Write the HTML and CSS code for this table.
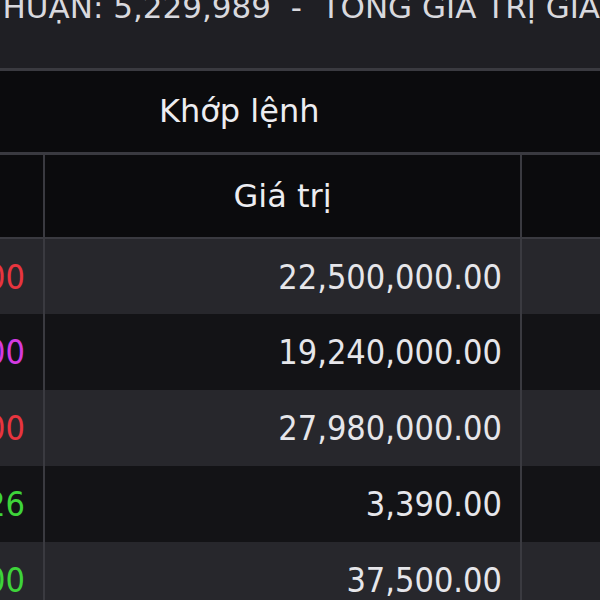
FILE: index.html
```html
<!DOCTYPE html>
<html>
<head>
    <title>Khớp lệnh</title>
    <link rel="stylesheet" href="styles.css">
</head>
<body>
    <div class="banner">
        <div class="banner-text">TỔNG KL THỎA THUẬN: 5,229,989 &nbsp;- &nbsp;TỔNG GIÁ TRỊ GIAO DỊCH</div>
    </div>

    <table class="board">
        <colgroup>
            <col class="col-price">
            <col class="col-value">
            <col class="col-rest">
        </colgroup>
        <thead>
            <tr class="head-group">
                <th colspan="3"><span class="group-label">Khớp lệnh</span></th>
            </tr>
            <tr class="head-cols">
                <th></th>
                <th>Giá trị</th>
                <th></th>
            </tr>
        </thead>
        <tbody>
            <tr>
                <td class="price down">22.500</td>
                <td class="value">22,500,000.00</td>
                <td></td>
            </tr>
            <tr>
                <td class="price ceil">24.000</td>
                <td class="value">19,240,000.00</td>
                <td></td>
            </tr>
            <tr>
                <td class="price down">27.900</td>
                <td class="value">27,980,000.00</td>
                <td></td>
            </tr>
            <tr>
                <td class="price up">33.926</td>
                <td class="value">3,390.00</td>
                <td></td>
            </tr>
            <tr>
                <td class="price up">37.500</td>
                <td class="value">37,500.00</td>
                <td></td>
            </tr>
        </tbody>
    </table>
</body>
</html>
```

FILE: styles.css
```css
* {
    margin: 0;
    padding: 0;
    box-sizing: border-box;
    font-family: 'DejaVu Sans', sans-serif;
}

body {
    background: #141417;
    color: #e6e6ea;
    width: 600px;
    height: 600px;
    overflow: hidden;
}

.banner {
    height: 71px;
    background: #1f1f24;
    border-bottom: 3px solid #3a3a40;
    overflow: hidden;
}

.banner-text {
    font-size: 31px;
    line-height: 30px;
    margin-top: -8px;
    margin-left: -262px;
    white-space: nowrap;
    color: #d9d9de;
}

.board {
    width: 600px;
    border-collapse: collapse;
    table-layout: fixed;
}

.col-price {
    width: 44px;
}

.col-value {
    width: 477px;
}

.col-rest {
    width: 79px;
}

th {
    background: #0b0b0d;
    color: #ededf1;
    font-size: 32px;
    font-weight: normal;
}

.head-group th {
    height: 82px;
    text-align: left;
    border-bottom: 3px solid #3a3a40;
}

.group-label {
    padding-left: 159px;
}

.head-cols th {
    height: 85px;
    border-bottom: 2px solid #3a3a40;
}

.head-cols th:not(:last-child),
td:not(:last-child) {
    border-right: 2px solid #3a3a40;
}

td {
    height: 76px;
    font-size: 34px;
    font-stretch: condensed;
    text-align: right;
    padding-right: 18px;
    white-space: nowrap;
    overflow: hidden;
}

tbody tr:nth-child(odd) td {
    background: #27272c;
}

tbody tr:nth-child(even) td {
    background: #131316;
}

.price {
    direction: rtl;
    text-align: right;
}

.down {
    color: #e8353f;
}

.ceil {
    color: #d53be0;
}

.up {
    color: #3ed43a;
}
```
